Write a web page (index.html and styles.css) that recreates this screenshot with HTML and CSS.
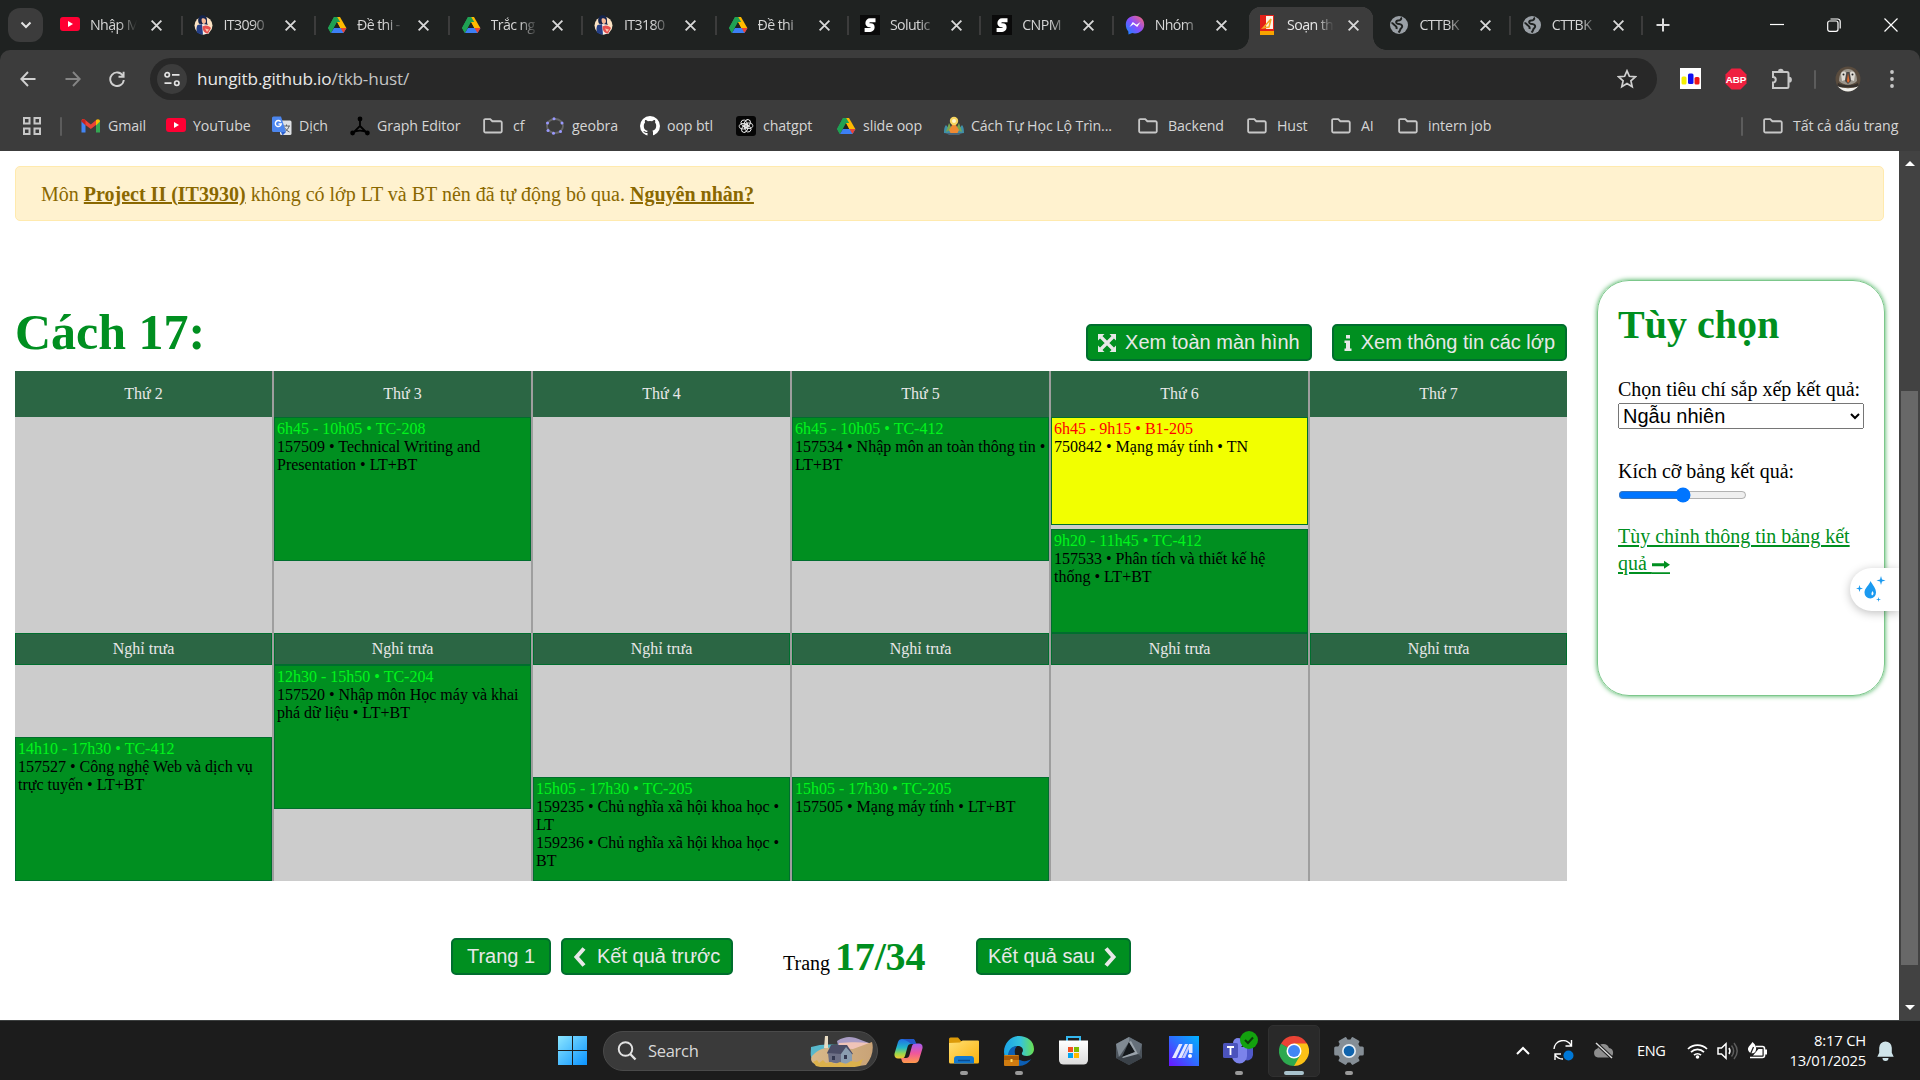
FILE: index.html
```html
<!DOCTYPE html>
<html lang="vi">
<head>
<meta charset="utf-8">
<title>Soạn thời khóa biểu</title>
<link rel="stylesheet" href="styles.css">
</head>
<body>
<svg class="defs" width="0" height="0">
  <defs>
    <linearGradient id="gMsg" x1="0" y1="1" x2="1" y2="0"><stop offset="0" stop-color="#0a8cff"/><stop offset=".5" stop-color="#8a4dff"/><stop offset="1" stop-color="#ff6a6a"/></linearGradient>
    <linearGradient id="gWin" x1="0" y1="0" x2="1" y2="1"><stop offset="0" stop-color="#8ce6ff"/><stop offset="1" stop-color="#0a93ff"/></linearGradient>
    <linearGradient id="gFold" x1="0" y1="0" x2="1" y2="1"><stop offset="0" stop-color="#ffdf73"/><stop offset="1" stop-color="#fbb20c"/></linearGradient>
    <linearGradient id="gAsus" x1="0" y1="1" x2="1" y2="0"><stop offset="0" stop-color="#6a14ff"/><stop offset=".5" stop-color="#2f6bff"/><stop offset="1" stop-color="#00b4ff"/></linearGradient>
    <linearGradient id="gEdge" x1="0" y1="0" x2="1" y2="0"><stop offset="0" stop-color="#1aa3e8"/><stop offset=".55" stop-color="#35c4dc"/><stop offset="1" stop-color="#6be04f"/></linearGradient>
    <linearGradient id="gCopA" x1="0" y1="0" x2="0" y2="1"><stop offset="0" stop-color="#1f6fe8"/><stop offset=".45" stop-color="#22b7c8"/><stop offset=".75" stop-color="#9ad84a"/><stop offset="1" stop-color="#f7c531"/></linearGradient>
    <linearGradient id="gCopB" x1="0" y1="0" x2="0" y2="1"><stop offset="0" stop-color="#a35cf0"/><stop offset=".5" stop-color="#f0569c"/><stop offset="1" stop-color="#ff9a4a"/></linearGradient>
    <linearGradient id="gStore" x1="0" y1="0" x2="0" y2="1"><stop offset="0" stop-color="#fff"/><stop offset="1" stop-color="#dcdcdc"/></linearGradient>
    <linearGradient id="gSand" x1="0" y1="0" x2="1" y2="0"><stop offset="0" stop-color="#d9b98a"/><stop offset="1" stop-color="#c9a377"/></linearGradient>
    <clipPath id="round"><circle cx="13" cy="13" r="12.5"/></clipPath>
    <symbol id="yt" viewBox="0 0 20 20"><rect y="2" width="20" height="14" rx="3" fill="#ff0033"/><path d="M8 6l5 3-5 3z" fill="#fff"/></symbol>
    <symbol id="drive" viewBox="0 0 20 20"><path d="M7 2h6L6.500 12.500 3.700 18 1 13z" fill="#21a354"/><path d="M7 2h6l6.300 11H13z" fill="#ffba00"/><path d="M7 2h3.200l3 5-3.200 0-6 11L1 13z" fill="#1fa153"/><path d="M4 18l3-5h12.500l-3 5z" fill="#3c7ff5"/><path d="M13.500 13h6l-3 5z" fill="#ea4335"/><path d="M10 7.300L13 13H7z" fill="#1f2221"/></symbol>
    <symbol id="girl" viewBox="0 0 20 20" preserveAspectRatio="none"><circle cx="9.500" cy="10.500" r="9" fill="#fce3c4"/><path d="M6.500.8c4-1.500 7 1 6.500 5 0 2 0 3 1 4l-9-1C3.500 6 4 2 6.500.8z" fill="#14244e"/><path d="M8 3.500c2-1 4 .5 4 2.500S11 9 9.500 9 7 4.500 8 3.500z" fill="#f5b896"/><path d="M3.500 10l5-1 2 9.500-3 1.300-4.500-2c-1-3.500-.5-6 .5-7.800z" fill="#243f86"/><path d="M8 9l5 1 3 4-1 4.500-6 1z" fill="#f3efe9"/><path d="M8.500 11.500c3-2 6.500-1 8.500 1.500l-3 5.500c-3 0-5.500-2.500-5.500-7z" fill="#e8504e"/><path d="M11 13.500l4 1-2 2.500z" fill="#ffc2ad"/></symbol>
    <symbol id="studocu" viewBox="0 0 20 20"><rect width="20" height="20" fill="#0a0a0a"/><path d="M15.500 5.300h-5.500a2.600 2.600 0 0 0-2.600 2.600v.3a2 2 0 0 0 2 2h1.200a2 2 0 0 1 2 2v.3a2.400 2.400 0 0 1-2.400 2.400H4.600" fill="none" stroke="#fff" stroke-width="4"/></symbol>
    <symbol id="msg" viewBox="0 0 20 20"><path d="M10 .8c5.300 0 9.200 3.800 9.200 8.800s-3.900 8.800-9.200 8.800c-1 0-2-.1-2.800-.4L3.500 19.500l-.2-3C1.800 14.800.8 12.500.8 9.600.8 4.600 4.700.8 10 .8z" fill="url(#gMsg)"/><path d="M4.500 12l3.300-5 3.700 2.700L15.500 7l-3.300 5-3.700-2.700z" fill="#fff"/></symbol>
    <symbol id="globe" viewBox="0 0 20 20"><circle cx="10" cy="10" r="9" fill="#9aa0a6"/><path d="M12 2.500c1 2-1 3-3 3S6.500 7.500 8 8.500s4 0 5 2-1 2.500-1.500 3.500-.5 2-2 3.500M2.500 8c2 0 2 1.500 3.500 2.500s2 2 1.500 3.500" fill="none" stroke="#1f2221" stroke-width="2"/></symbol>
    <symbol id="x" viewBox="0 0 12 12"><path d="M1.500 1.500l9 9M10.500 1.500l-9 9" stroke="#d8d8d8" stroke-width="1.700" fill="none"/></symbol>
    <symbol id="folder" viewBox="0 0 21 17"><path d="M1.200 2.500a1.200 1.200 0 0 1 1.200-1.300h5.200l2.200 2.300h8.500a1.400 1.400 0 0 1 1.400 1.400v9a1.400 1.400 0 0 1-1.400 1.400H2.600a1.400 1.400 0 0 1-1.400-1.400z" fill="none" stroke="#c7c7c7" stroke-width="1.900"/></symbol>
  </defs>
</svg>

<header class="chrome">
  <div class="tabstrip">
    <button class="tab-search"><svg width="12" height="8" viewBox="0 0 12 8"><path d="M1.500 1.500L6 6l4.500-4.500" fill="none" stroke="#e3e3e3" stroke-width="2"/></svg></button>
    <div class="tabs">
      <div class="tab"><svg class="fav"><use href="#yt"/></svg><span>Nhập M</span><svg class="close"><use href="#x"/></svg></div>
      <div class="tab"><svg class="fav"><use href="#girl"/></svg><span>IT3090</span><svg class="close"><use href="#x"/></svg></div>
      <div class="tab"><svg class="fav"><use href="#drive"/></svg><span>Đề thi -</span><svg class="close"><use href="#x"/></svg></div>
      <div class="tab"><svg class="fav"><use href="#drive"/></svg><span>Trắc ng</span><svg class="close"><use href="#x"/></svg></div>
      <div class="tab"><svg class="fav"><use href="#girl"/></svg><span>IT3180</span><svg class="close"><use href="#x"/></svg></div>
      <div class="tab"><svg class="fav"><use href="#drive"/></svg><span>Đề thi</span><svg class="close"><use href="#x"/></svg></div>
      <div class="tab"><svg class="fav"><use href="#studocu"/></svg><span>Solutic</span><svg class="close"><use href="#x"/></svg></div>
      <div class="tab"><svg class="fav"><use href="#studocu"/></svg><span>CNPM</span><svg class="close"><use href="#x"/></svg></div>
      <div class="tab no-sep"><svg class="fav"><use href="#msg"/></svg><span>Nhóm</span><svg class="close"><use href="#x"/></svg></div>
      <div class="tab active no-sep"><svg class="fav" viewBox="0 0 20 20"><rect x="3" width="14" height="20" fill="#e32119"/><path d="M9 1h7v13H9z" fill="#fff3e6"/><path d="M6 13l8-9-2 8z" fill="none" stroke="#f5a623" stroke-width="1.500"/><rect x="3" y="16" width="14" height="4" fill="#f7a400"/></svg><span>Soạn th</span><svg class="close"><use href="#x"/></svg></div>
      <div class="tab"><svg class="fav"><use href="#globe"/></svg><span>CTTBK</span><svg class="close"><use href="#x"/></svg></div>
      <div class="tab"><svg class="fav"><use href="#globe"/></svg><span>CTTBK</span><svg class="close"><use href="#x"/></svg></div>
    </div>
    <svg class="newtab" width="14" height="14" viewBox="0 0 14 14"><path d="M7 .5v13M.5 7h13" stroke="#dcdcdc" stroke-width="2"/></svg>
    <div class="winctl">
      <svg width="14" height="14" viewBox="0 0 14 14"><path d="M0 6.500h14" stroke="#fff" stroke-width="1.200"/></svg>
      <svg width="14" height="14" viewBox="0 0 14 14"><rect x=".7" y="3" width="10.300" height="10.300" rx="2" fill="none" stroke="#fff" stroke-width="1.200"/><path d="M3.500 1h7a2.500 2.500 0 0 1 2.700 2.500v7" fill="none" stroke="#fff" stroke-width="1.200"/></svg>
      <svg width="14" height="14" viewBox="0 0 14 14"><path d="M.5.5l13 13M13.500.5l-13 13" stroke="#fff" stroke-width="1.200"/></svg>
    </div>
  </div>

  <div class="toolbar">
    <div class="nav">
      <svg width="16" height="16" viewBox="0 0 16 16"><path d="M15.500 8H1.500M8 1L1.300 8 8 15" fill="none" stroke="#d0d0d0" stroke-width="1.900"/></svg>
      <svg width="16" height="16" viewBox="0 0 16 16"><path d="M.5 8h14M8 1l6.700 7L8 15" fill="none" stroke="#858585" stroke-width="1.900"/></svg>
      <svg width="16" height="16" viewBox="0 0 16 16"><path d="M13.800 4.600A6.800 6.800 0 1 0 14.800 9M14.600.8v5H9.500" fill="none" stroke="#d0d0d0" stroke-width="1.900"/></svg>
    </div>
    <div class="omnibox">
      <span class="site"><svg width="16" height="16" viewBox="0 0 16 16"><g fill="none" stroke="#e3e3e3" stroke-width="1.700"><circle cx="3.200" cy="3.800" r="2.200"/><path d="M8 3.800h7.500M.5 12.200h7"/><circle cx="12.800" cy="12.200" r="2.200"/></g></svg></span>
      <span class="url">hungitb.github.io<i>/tkb-hust/</i></span>
      <svg class="star" width="20" height="20" viewBox="0 0 20 20"><path d="M10 1.800l2.400 5.500 6 .5-4.500 4 1.300 5.900L10 14.600l-5.200 3.100 1.300-5.900-4.500-4 6-.5z" fill="none" stroke="#d0d0d0" stroke-width="1.700"/></svg>
    </div>
    <div class="exts">
      <svg width="22" height="22" viewBox="0 0 22 22"><rect width="21" height="21" fill="#fff"/><rect x="1.500" y="8.500" width="5" height="8" rx="1.500" fill="#f4ee00"/><rect x="8" y="5.500" width="5.500" height="10.500" rx="1.500" fill="#1010f0"/><rect x="14.500" y="9" width="5" height="7.500" rx="1.500" fill="#f01818"/></svg>
      <svg width="22" height="22" viewBox="0 0 22 22"><path d="M6.500.5h9l6 6v9l-6 6h-9l-6-6v-9z" fill="#ef1f3f"/><text x="11" y="14.600" text-anchor="middle" class="abp">ABP</text></svg>
      <svg width="22" height="22" viewBox="0 0 22 22"><path d="M2 4h14a1.500 1.500 0 0 1 1.500 1.500v13A1.500 1.500 0 0 1 16 20H2v-5.500a2.700 2.700 0 0 0 0-5.500z" fill="none" stroke="#c7c7c7" stroke-width="2"/><path d="M7 3.500a2.800 2.800 0 0 1 5.600 0zM18 8.800a2.900 2.900 0 0 1 0 5.800z" fill="#c7c7c7"/></svg>
      <i class="vline"></i>
      <svg width="26" height="26" viewBox="0 0 26 26"><g clip-path="url(#round)"><rect width="26" height="26" fill="#5a4c3e"/><path d="M4 15c0-8 4-12 9-12s9 4 9 12c-5 5-13 5-18 0z" fill="#9b958b"/><path d="M6 8c1-3 4-3 5-1l-1 7-3 1zM20 8c-1-3-4-3-5-1l1 7 3 1z" fill="#dedad3"/><circle cx="8.500" cy="8.500" r="1" fill="#222"/><circle cx="17.500" cy="8.500" r="1" fill="#222"/><path d="M11.500 6h3l1.500 9-3 3-3-3z" fill="#4a4645"/><path d="M13 7l1.500 8-1.500 2-1-2z" fill="#e06a2c"/><path d="M3 17c6 3 14 3 20 0l1 4H2z" fill="#35302c"/><path d="M2 20c7 3 15 3 22 0v6H2z" fill="#efeeea"/></g></svg>
      <svg width="4" height="20" viewBox="0 0 4 20"><g fill="#c7c7c7"><circle cx="2" cy="3" r="1.900"/><circle cx="2" cy="10" r="1.900"/><circle cx="2" cy="17" r="1.900"/></g></svg>
    </div>
  </div>

  <nav class="bookmarks">
    <svg class="apps" width="18" height="18" viewBox="0 0 18 18"><g fill="none" stroke="#c7c7c7" stroke-width="2"><rect x="1" y="1" width="5.500" height="5.500"/><rect x="11.500" y="1" width="5.500" height="5.500"/><rect x="1" y="11.500" width="5.500" height="5.500"/><rect x="11.500" y="11.500" width="5.500" height="5.500"/></g></svg>
    <i class="vline"></i>
    <a><svg viewBox="0 0 20 20"><path d="M.5 5v11.500h4V9z" fill="#4285f4"/><path d="M19 5v11.500h-4V9z" fill="#34a853"/><path d="M.5 5c0-2 2-2.500 3.500-1.300L9.800 8.500l5.700-4.800L15 9l-5.200 4L4.500 9z" fill="#ea4335"/><path d="M15 4c2-1.500 4-.5 4 1.500L15 9.500z" fill="#fbbc04"/><path d="M.5 5.500L4.500 9V4C2.500 2.500.5 3.500.5 5.500z" fill="#c5221f"/></svg><span>Gmail</span></a>
    <a><svg><use href="#yt"/></svg><span>YouTube</span></a>
    <a><svg viewBox="0 0 20 20"><rect x="8" y="4.500" width="11.500" height="14.500" rx="1.500" fill="#dfe1e5"/><path d="M11 10h7M14.500 8.500V10M12 16c3-1.500 4.500-3.500 5-6M12.500 11.500c1 2 3 3.500 5 4.500" stroke="#5f6368" fill="none"/><path d="M1.500.5H9L14 16H1.500A1.500 1.500 0 0 1 0 14.500V2A1.500 1.500 0 0 1 1.500.5z" fill="#4c86ee"/><path d="M9 16h5l-3.500 3.500z" fill="#2b5fce"/><path d="M8.700 5.700A3 3 0 1 0 9.300 8H6.500" fill="none" stroke="#fff" stroke-width="1.400"/></svg><span>Dịch</span></a>
    <a><svg viewBox="0 0 20 20"><path d="M10 3v7L3 17M10 10l7 7M3 16.500c4-2.500 10-2.500 14 0" fill="none" stroke="#000" stroke-width="1.800"/><circle cx="10" cy="3" r="2.400"/><circle cx="2.600" cy="17" r="2.400"/><circle cx="17.400" cy="17" r="2.400"/></svg><span>Graph Editor</span></a>
    <a class="dir"><svg><use href="#folder"/></svg><span>cf</span></a>
    <a><svg viewBox="0 0 20 20"><ellipse cx="10" cy="10" rx="8" ry="7" fill="none" stroke="#666" stroke-width="1.800"/><g fill="#9a99ff"><circle cx="9" cy="2.800" r="1.500"/><circle cx="17" cy="7" r="1.500"/><circle cx="15.500" cy="15.500" r="1.500"/><circle cx="8.500" cy="17.300" r="1.500"/><circle cx="3" cy="14.500" r="1.500"/><circle cx="2.500" cy="7" r="1.500"/></g></svg><span>geobra</span></a>
    <a><svg viewBox="0 0 20 20"><circle cx="10" cy="10" r="10" fill="#fff"/><path d="M7.500 20v-3c-3 .6-3.500-1.300-4.300-2 1.800-.4 2 1.200 4 1l.4-1.300C4.500 14.300 3.800 12 3.800 9.800c0-1.300.5-2.200 1.200-3-.3-1-.2-2 .1-2.800 1 0 2 .6 2.800 1.200a9 9 0 0 1 4.200 0C13 4.600 14 4 15 4c.3.900.3 1.900.1 2.800.7.800 1.100 1.700 1.100 3 0 2.600-1 4.500-3.800 4.900.5.600.6 1 .6 2V20z" fill="#3c3c3c"/></svg><span>oop btl</span></a>
    <a><svg viewBox="0 0 20 20"><rect width="20" height="20" rx="3" fill="#050505"/><g fill="none" stroke="#eee" stroke-width=".9"><ellipse cx="10" cy="7.200" rx="2.800" ry="4" transform="rotate(25 10 10)"/><ellipse cx="10" cy="7.200" rx="2.800" ry="4" transform="rotate(85 10 10)"/><ellipse cx="10" cy="7.200" rx="2.800" ry="4" transform="rotate(145 10 10)"/><ellipse cx="10" cy="7.200" rx="2.800" ry="4" transform="rotate(205 10 10)"/><ellipse cx="10" cy="7.200" rx="2.800" ry="4" transform="rotate(265 10 10)"/><ellipse cx="10" cy="7.200" rx="2.800" ry="4" transform="rotate(325 10 10)"/></g></svg><span>chatgpt</span></a>
    <a><svg><use href="#drive"/></svg><span>slide oop</span></a>
    <a><svg viewBox="0 0 20 20"><path d="M0 17c0-5 1-7 2-8l4 5 2 4zM20 17c0-5-1-7-2-8l-4 5-2 4z" fill="#3f8fa8"/><path d="M2 16l3-9 3 6zM18 16l-3-9-3 6z" fill="#79a850"/><path d="M10 6l5 8-2 4H7l-2-4z" fill="#ef8a33"/><circle cx="10" cy="5" r="4.200" fill="#f7d560"/><circle cx="10" cy="5" r="2" fill="#fff6cf"/><path d="M2 17h16l-3 2H5z" fill="#4a6478"/></svg><span>Cách Tự Học Lộ Trìn...</span></a>
    <a class="dir"><svg><use href="#folder"/></svg><span>Backend</span></a>
    <a class="dir"><svg><use href="#folder"/></svg><span>Hust</span></a>
    <a class="dir"><svg><use href="#folder"/></svg><span>AI</span></a>
    <a class="dir"><svg><use href="#folder"/></svg><span>intern job</span></a>
    <i class="vline"></i>
    <a class="dir"><svg><use href="#folder"/></svg><span>Tất cả dấu trang</span></a>
  </nav>
</header>

<div class="viewport">
  <main class="page">
    <div class="alert">Môn <a>Project II (IT3930)</a> không có lớp LT và BT nên đã tự động bỏ qua. <a>Nguyên nhân?</a></div>
    <div class="content">
      <section class="result">
        <div class="result-head">
          <h1>Cách 17:</h1>
          <button class="btn"><svg width="18" height="18" viewBox="0 0 18 18"><g fill="#e8e8e8"><path d="M0 0h6.500L0 6.500zM18 0v6.500L11.500 0zM0 18v-6.500L6.500 18zM18 18h-6.500l6.500-6.500z"/><path d="M3 3l12 12M15 3L3 15" stroke="#e8e8e8" stroke-width="3.200"/></g></svg>Xem toàn màn hình</button>
          <button class="btn"><svg width="8" height="16" viewBox="0 0 8 16"><path d="M2 0h4v3.500H2zM.5 5.500H6v8h1.500V16h-7v-2.500H2V8H.5z" fill="#e8e8e8"/></svg>Xem thông tin các lớp</button>
        </div>
        <div class="timetable">
          <div class="day">
            <div class="dayname">Thứ 2</div>
            <div class="session"></div>
            <div class="lunch">Nghỉ trưa</div>
            <div class="session">
              <div class="lesson" style="--wait:100;--len:200"><b>14h10 - 17h30 • TC-412</b>157527 • Công nghệ Web và dịch vụ trực tuyến • LT+BT</div>
            </div>
          </div>
          <div class="day">
            <div class="dayname">Thứ 3</div>
            <div class="session">
              <div class="lesson" style="--wait:0;--len:200"><b>6h45 - 10h05 • TC-208</b>157509 • Technical Writing and Presentation • LT+BT</div>
            </div>
            <div class="lunch">Nghỉ trưa</div>
            <div class="session">
              <div class="lesson" style="--wait:0;--len:200"><b>12h30 - 15h50 • TC-204</b>157520 • Nhập môn Học máy và khai phá dữ liệu • LT+BT</div>
            </div>
          </div>
          <div class="day">
            <div class="dayname">Thứ 4</div>
            <div class="session"></div>
            <div class="lunch">Nghỉ trưa</div>
            <div class="session">
              <div class="lesson" style="--wait:155;--len:145"><b>15h05 - 17h30 • TC-205</b>159235 • Chủ nghĩa xã hội khoa học • LT<br>159236 • Chủ nghĩa xã hội khoa học • BT</div>
            </div>
          </div>
          <div class="day">
            <div class="dayname">Thứ 5</div>
            <div class="session">
              <div class="lesson" style="--wait:0;--len:200"><b>6h45 - 10h05 • TC-412</b>157534 • Nhập môn an toàn thông tin • LT+BT</div>
            </div>
            <div class="lunch">Nghỉ trưa</div>
            <div class="session">
              <div class="lesson" style="--wait:155;--len:145"><b>15h05 - 17h30 • TC-205</b>157505 • Mạng máy tính • LT+BT</div>
            </div>
          </div>
          <div class="day">
            <div class="dayname">Thứ 6</div>
            <div class="session">
              <div class="lesson lab" style="--wait:0;--len:150"><b>6h45 - 9h15 • B1-205</b>750842 • Mạng máy tính • TN</div>
              <div class="lesson" style="--wait:5;--len:145"><b>9h20 - 11h45 • TC-412</b>157533 • Phân tích và thiết kế hệ thống • LT+BT</div>
            </div>
            <div class="lunch">Nghỉ trưa</div>
            <div class="session"></div>
          </div>
          <div class="day">
            <div class="dayname">Thứ 7</div>
            <div class="session"></div>
            <div class="lunch">Nghỉ trưa</div>
            <div class="session"></div>
          </div>
        </div>
        <div class="pager">
          <button class="btn first">Trang 1</button>
          <button class="btn prev"><svg width="13" height="20" viewBox="0 0 13 20"><path d="M11 1.500L3.500 10l7.500 8.500" fill="none" stroke="#e8e8e8" stroke-width="4"/></svg>Kết quả trước</button>
          <p class="count">Trang <strong>17/34</strong></p>
          <button class="btn next">Kết quả sau<svg width="13" height="20" viewBox="0 0 13 20"><path d="M2 1.500L9.500 10 2 18.500" fill="none" stroke="#e8e8e8" stroke-width="4"/></svg></button>
        </div>
      </section>
      <aside class="options">
        <h2>Tùy chọn</h2>
        <label>Chọn tiêu chí sắp xếp kết quả:</label>
        <select><option>Ngẫu nhiên</option></select>
        <label class="size">Kích cỡ bảng kết quả:</label>
        <input type="range" value="50">
        <a>Tùy chỉnh thông tin bảng kết quả <svg width="18" height="14" viewBox="0 0 18 14"><path d="M0 3.300h12V.8L18 4.800l-6 4v-2.500H0zM0 12.200h18V14H0z" fill="#008f20"/></svg></a>
      </aside>
    </div>
    <div class="floater"><svg width="30" height="28" viewBox="0 0 30 28"><path d="M14.500 5c2 4 5.500 7 5.500 11.500a5.700 6 0 0 1-11.500 0C8.500 12 13.500 9 14.500 5z" fill="#1b9af0"/><path d="M16.500 15c1.500 2 1.300 3.500-.5 4.500-1-1.500-.5-3 .5-4.500z" fill="#fff"/><path d="M25 0l1 3.500 3.500 1-3.500 1L25 9l-1-3.500-3.500-1 3.500-1zM3.500 9l.8 2.700L7 12.500l-2.700.8-.8 2.700-.8-2.700L0 12.500l2.700-.8zM22.500 21l.5 2 2 .5-2 .5-.5 2-.5-2-2-.5 2-.5z" fill="#1b9af0"/></svg></div>
  </main>
  <div class="scrollbar">
    <svg width="10" height="5" viewBox="0 0 10 5"><path d="M5 0l5 5H0z" fill="#fff"/></svg>
    <div class="thumb"></div>
    <svg width="10" height="5" viewBox="0 0 10 5"><path d="M0 0h10L5 5z" fill="#fff"/></svg>
  </div>
</div>

<footer class="taskbar">
  <div class="apps-row">
    <div class="app"><svg width="29" height="29" viewBox="0 0 29 29"><path d="M0 0h14v14H0zM15 0h14v14H15zM0 15h14v14H0zM15 15h14v14H15z" fill="url(#gWin)"/></svg></div>
    <div class="search">
      <svg width="20" height="20" viewBox="0 0 20 20"><circle cx="8.500" cy="8" r="6.800" fill="none" stroke="#e3e3e3" stroke-width="1.900"/><path d="M13.200 13l5.300 5.500" stroke="#e3e3e3" stroke-width="2.400"/></svg>
      <span>Search</span>
      <svg class="scene" width="64" height="32" viewBox="0 0 64 32"><path d="M2 12c10-3 16-3 30-2l4 8-30 8c-6-3-4-8-4-14z" fill="#58b8cc"/><path d="M28 6c10-6 16-4 24-1l8 3-30 6z" fill="#a99cc4"/><path d="M30 8c12-1 20-1 30 0l3 4-33 5z" fill="#f0c4b8"/><path d="M4 20c6-6 12-8 20-7l20 1 19-7c2 7 0 16-6 23-18 3-42 3-53-2-3-3-2-6 0-8z" fill="url(#gSand)"/><path d="M16 1h3v12h-4z" fill="#e9dcc3"/><path d="M18 18l4-8h16l6 9-7 2-18-2z" fill="#4b4d66"/><path d="M19 18l13 1v10l-12-2z" fill="#6c6f85"/><path d="M32 19l5-7 6 7v9l-11 1z" fill="#8a9db0"/><path d="M23 21h3v4h-3zM35 20h3v4h-3z" fill="#333850"/><path d="M4 27l4-2 2 3 4-3 3 3 5-1 4 2 5-2 6 2 5-3 6 1 6-3-3 7c-14 3-34 3-44 0z" fill="#dcb24c"/></svg>
    </div>
    <div class="app"><svg width="29" height="26" viewBox="0 0 29 26"><path d="M8 1h10c3 0 3 2 4 5h-5c-2 0-3 1-3.500 3L11 18c-.7 2-2 2.500-4 2.500H4C1 20.500-.5 18 1 14L4 4c.7-2 2-3 4-3z" fill="url(#gCopA)"/><path d="M21 25H11c-3 0-3-2-4-5h5c2 0 3-1 3.500-3L18 8c.7-2 2-2.500 4-2.500h3c3 0 4.500 2.500 3 6.500l-3 10c-.7 2-2 3-4 3z" fill="url(#gCopB)"/><path d="M8 1h10c3 0 3 2 4 5h-5c-3-3-6-4-9-5z" fill="#2358c8"/></svg></div>
    <div class="app run"><svg width="30" height="27" viewBox="0 0 30 27"><path d="M0 2a1.500 1.500 0 0 1 1.500-1.500H9l3 3.500h6v8H0z" fill="#dc9a08"/><path d="M0 6l11-.5 2.500-2H29a1 1 0 0 1 1 1V25a1.500 1.500 0 0 1-1.500 1.500h-27A1.500 1.500 0 0 1 0 25z" fill="url(#gFold)"/><path d="M5 26.500V22a3 3 0 0 1 3-3h14a3 3 0 0 1 3 3v4.500z" fill="#1278cf"/><path d="M9 23.500h12" stroke="#084c91" stroke-width="1.500"/></svg></div>
    <div class="app run"><svg width="30" height="30" viewBox="0 0 30 30"><path d="M0 16C0 7 7 0 15 0s15 5 15 13c0 4-3 7-7 7-5 0-6-2-4.500-4 1.500-3-1-6-4.500-6C8 10 4 15 4 25 1.500 23 0 20 0 16z" fill="url(#gEdge)"/><path d="M4 20c0-6 4-10 9-10-3 3-3 8 0 12 4 4 10 4 14 1-2 4-7 7-12 7-6 0-11-4-11-10z" fill="#0c5fb5"/><rect y="19" width="15" height="11" rx="1" fill="#d07c10"/><path d="M0 20h15v4H0z" fill="#a85a08"/><rect x="6.500" y="23" width="2" height="3" fill="#ffd75e"/></svg></div>
    <div class="app"><svg width="29" height="29" viewBox="0 0 29 29"><path d="M8 6V1h13v5" fill="none" stroke="#34b7ee" stroke-width="2"/><path d="M0 4.500h29V24a4.500 4.500 0 0 1-4.500 4.500h-20A4.500 4.500 0 0 1 0 24z" fill="url(#gStore)"/><path d="M9 11h5v5H9z" fill="#f25022"/><path d="M15 11h5v5h-5z" fill="#7fba00"/><path d="M9 17h5v5H9z" fill="#00a4ef"/><path d="M15 17h5v5h-5z" fill="#ffb900"/></svg></div>
    <div class="app"><svg width="26" height="28" viewBox="0 0 26 28"><path d="M13 0l13 7v14l-13 7L0 21V7z" fill="#4b535b"/><path d="M13 0L0 7l3 13L13 5z" fill="#808a93"/><path d="M13 0l13 7-3 11L13 5z" fill="#66707a"/><path d="M0 21l5-2 17-2 4 4-13 7z" fill="#3b4249"/><path d="M13 5l6 10-13 5z" fill="#14181b"/><path d="M13 5l2-1 7 13-15 4-1-1 13-5z" fill="#9aa3ab"/></svg></div>
    <div class="app"><svg width="30" height="30" viewBox="0 0 30 30"><rect width="30" height="30" fill="url(#gAsus)"/><path d="M3 22L10 8h3.500L7 22zM9 22l7-14h3l-6.500 14z" fill="#e6e8ff"/><path d="M20 8h3.500v9H20z" fill="#e6e8ff"/><circle cx="21" cy="20" r="2" fill="#fff"/><path d="M13 22l7-14v5l-4 9z" fill="#c3c9ff"/></svg></div>
    <div class="app run"><svg class="teams" width="36" height="34" viewBox="0 0 36 34"><circle cx="15" cy="12" r="5" fill="#7b83eb"/><path d="M20 15h10v9a6 6 0 0 1-8 5z" fill="#5059c9"/><path d="M9 16h15v9a7.500 7.500 0 0 1-15 0z" fill="#7b83eb"/><rect y="12" width="15" height="15" rx="1.500" fill="#4b53bc"/><path d="M4 16h7M7.500 16v8" stroke="#fff" stroke-width="1.800"/><circle cx="26" cy="9" r="9" fill="#13a10e"/><path d="M22 9l3 3 5-5.500" fill="none" stroke="#0a3d08" stroke-width="2"/></svg></div>
    <div class="app run current"><svg width="30" height="30" viewBox="0 0 30 30"><path d="M15 15L2 7.500A15 15 0 0 1 28 7.500z" fill="#ea4335"/><path d="M15 15V7.500h13A15 15 0 0 1 15 30z" fill="#fbc116"/><path d="M15 15l6.500 3.800L15 30A15 15 0 0 1 2 7.500z" fill="#2da94f"/><path d="M2 7.500h13v7.500z" fill="#ea4335"/><circle cx="15" cy="15" r="7.500" fill="#fff"/><circle cx="15" cy="15" r="6" fill="#4186f3"/></svg></div>
    <div class="app run"><svg width="30" height="28" viewBox="0 0 30 28"><g fill="#858e96"><circle cx="15" cy="14" r="11.500"/><rect x="10.500" width="9" height="28" rx="1.500" transform="rotate(30 15 14)"/><rect x="10.500" y="-.8" width="9" height="29.600" rx="1.500" transform="rotate(90 15 14)"/><rect x="10.500" width="9" height="28" rx="1.500" transform="rotate(150 15 14)"/></g><circle cx="15" cy="14" r="7" fill="#e6eef5"/><circle cx="15" cy="14" r="5.300" fill="#0f63ad"/></svg></div>
  </div>
  <div class="tray">
    <svg width="14" height="9" viewBox="0 0 14 9"><path d="M1 8l6-6 6 6" fill="none" stroke="#fff" stroke-width="2"/></svg>
    <svg width="21" height="21" viewBox="0 0 21 21"><path d="M1 9a9 9 0 0 1 17-3.500M18.500 0v6h-6M2 20v-6h6M2 14.500A9 9 0 0 0 10 19" fill="none" stroke="#fff" stroke-width="1.400"/><circle cx="15.500" cy="15.500" r="5" fill="#0078d7"/></svg>
    <svg width="21" height="17" viewBox="0 0 21 17"><path d="M5 15.500a4.600 4.600 0 0 1-.5-9A6 6 0 0 1 16 6a4.800 4.800 0 0 1 0 9.500z" fill="#8e8e8e"/><path d="M3 1l16 15" stroke="#1c1c1c" stroke-width="3.500"/><path d="M3 1l16 15" stroke="#ddd" stroke-width="1.400"/></svg>
    <span class="lang">ENG</span>
    <svg width="21" height="16" viewBox="0 0 21 16"><g fill="none" stroke="#fff" stroke-width="1.700"><path d="M1 6a13.500 13.500 0 0 1 19 0M4 9.200a9 9 0 0 1 13 0M7 12.200a5 5 0 0 1 7 0"/></g><circle cx="10.500" cy="14" r="1.800" fill="#fff"/></svg>
    <svg width="21" height="18" viewBox="0 0 21 18"><path d="M1 6h3.500L9 1.800v14.400L4.500 12H1z" fill="none" stroke="#fff" stroke-width="1.500"/><path d="M12 6c1.300 2 1.300 4 0 6" fill="none" stroke="#fff" stroke-width="1.500"/><path d="M14.500 3.500c2.700 3.500 2.700 7.500 0 11M17 1c4 5 4 11 0 16" fill="none" stroke="#5c5c5c" stroke-width="1.500"/></svg>
    <svg width="21" height="18" viewBox="0 0 21 18"><path d="M9 4.500h6.500a2 2 0 0 1 2 2v7a2 2 0 0 1-2 2H3" fill="none" stroke="#fff" stroke-width="1.600"/><path d="M19 7.500v5" stroke="#fff" stroke-width="2"/><path d="M11.500 7h4v6.500H6z" fill="#fff"/><path d="M5.500 0C9 3 10 6 8.500 9.500 7 12 3 12 1.500 9 0 5.500 2 5 5.500 0z" fill="#fff"/><path d="M6.500 5L3 13" stroke="#1c1c1c" stroke-width="1.200"/></svg>
    <div class="clock">8:17 CH<br>13/01/2025</div>
    <svg width="17" height="20" viewBox="0 0 17 20"><path d="M8.500.5a6.300 6.300 0 0 1 6.300 6.300v5l1.900 4H.3l1.900-4v-5A6.300 6.300 0 0 1 8.500.5z" fill="#cfe4ea"/><path d="M5.500 17h6a3 3 0 0 1-6 0z" fill="#cfe4ea"/></svg>
  </div>
</footer>
</body>
</html>
```
FILE: styles.css
```css
* { box-sizing: border-box; }
html, body { margin: 0; height: 1080px; overflow: hidden; }
body {
  display: flex; flex-direction: column; width: 1920px;
  background: #fff; color: #000;
  font: 20px/1.15 "Liberation Serif", "Times New Roman", serif;
}
svg { display: block; flex: none; }
.defs { position: absolute; }
button { font: inherit; border: 0; padding: 0; }
h1, h2, p { margin: 0; }

/* Browser frame */
.chrome {
  height: 151px; flex: none; background: #1f2221; color: #d5d5d5;
  font: 14.2px/20px "Open Sans", "Noto Sans", sans-serif;
}
.tabstrip { display: flex; align-items: center; height: 50px; padding-left: 8px; }
.tab-search {
  width: 35px; height: 34px; border-radius: 12px; background: #3c3c3c;
  display: flex; align-items: center; justify-content: center;
}
.tabs { display: flex; margin-left: 5px; height: 50px; }
.tab {
  position: relative; width: 132.400px; height: 50px; padding-left: 12px;
  display: flex; align-items: center;
}
.tab:nth-child(-n+5) { width: 133.500px; }
.tab .fav { width: 20px; height: 20px; }
.tab span {
  width: 48px; margin-left: 10px; overflow: hidden; white-space: nowrap; letter-spacing: -.6px;
  -webkit-mask-image: linear-gradient(90deg, #000 60%, transparent 98%);
  mask-image: linear-gradient(90deg, #000 60%, transparent 98%);
}
.tab .close { width: 13px; height: 13px; margin-left: 12px; }
.tab::after {
  content: ""; position: absolute; right: -1px; top: 16px; width: 2px; height: 19px; background: #3c3c3c;
}
.tab.no-sep::after { display: none; }
.tab.active { z-index: 1; color: #e8e8e8; }
.tab.active::before {
  content: ""; position: absolute; z-index: -1; left: -9px; right: -9px; top: 7px; bottom: 0;
  background:
    radial-gradient(circle at 0 0, transparent 12.500px, #3c3c3c 13px) left bottom / 13px 13px no-repeat,
    radial-gradient(circle at 100% 0, transparent 12.500px, #3c3c3c 13px) right bottom / 13px 13px no-repeat,
    radial-gradient(circle at 100% 100%, #3c3c3c 12px, transparent 12.500px) 13px 0 / 12px 12px no-repeat,
    radial-gradient(circle at 0 100%, #3c3c3c 12px, transparent 12.500px) calc(100% - 13px) 0 / 12px 12px no-repeat,
    linear-gradient(#3c3c3c, #3c3c3c) 25px 0 / calc(100% - 50px) 12px no-repeat,
    linear-gradient(#3c3c3c, #3c3c3c) 13px 12px / calc(100% - 26px) 100% no-repeat;
}
.newtab { margin-left: 14px; }
.winctl { display: flex; gap: 43px; margin: 0 22px 0 auto; }

.toolbar {
  display: flex; align-items: center; height: 58px; padding-left: 20px;
  background: #3c3c3c; border-radius: 10px 10px 0 0;
}
.nav { display: flex; gap: 28.500px; width: 130px; }
.omnibox {
  display: flex; align-items: center; width: 1507px; height: 42px; padding: 0 20px 0 7px;
  border-radius: 21px; background: #282828;
}
.site {
  width: 30px; height: 30px; border-radius: 50%; background: #3c3c3c;
  display: flex; align-items: center; justify-content: center;
}
.url { margin-left: 10px; font-size: 17.200px; line-height: 24px; letter-spacing: -.15px; color: #e8e8e8; }
.url i { font-style: normal; color: #c4c4c4; }
.star { margin-left: auto; }
.exts { display: grid; grid-template-columns: 45px 46px 43px 21px 55px 4px; align-items: center; margin-left: 23px; }
.abp { font: bold 9.800px "Liberation Sans", Arial, sans-serif; fill: #fff; }
.vline { width: 2px; height: 19px; background: #5c5c5c; border-radius: 1px; }

.bookmarks {
  display: grid; align-items: center; height: 43px; background: #3c3c3c;
  padding: 0 0 7px 23px;
  grid-template-columns: 37px 21px 85px 106px 78px 133px 62px 95px 96px 100px 108px 194px 109px 84px 67px 343px 22px auto;
}
.bookmarks a { display: flex; align-items: center; gap: 7px; white-space: nowrap; letter-spacing: -.1px; }
.bookmarks a svg { width: 20px; height: 20px; }
.bookmarks a.dir { gap: 10px; }

/* Page */
.viewport { display: flex; height: 869px; flex: none; }
.page { position: relative; width: 1899px; padding: 15px; background: #fff; }
.alert {
  height: 55px; padding: 0 25px; border: 1px solid #ffeaae; border-radius: 5px;
  background: #fff2cf; color: #8a6800; line-height: 54px;
}
.alert a { font-weight: bold; text-decoration: underline; }
.content { display: flex; align-items: flex-start; gap: 30px; margin-top: 59px; }
.result { width: 1552px; }
.result-head { display: flex; align-items: flex-end; gap: 20px; height: 91px; padding-bottom: 10px; }
.result-head h1 { margin: 0 auto 1px 0; font-size: 50px; line-height: 56px; color: #008f20; }
.btn {
  display: flex; align-items: center; height: 37px; padding: 0 10px; gap: 9px;
  border: 2px solid #006e2e; border-radius: 5px; background: #008f20; color: #e8e8e8;
  font: 20px/33px "Liberation Sans", Arial, sans-serif; white-space: nowrap;
}
.timetable { display: grid; grid-template-columns: repeat(6, 257px); gap: 2px; background: #9e9e9e; font-size: 16px; line-height: 18px; }
.dayname, .lunch { background: #2b6644; color: #e8e8e8; text-align: center; }
.dayname { height: 46px; line-height: 45px; }
.lunch { height: 32px; line-height: 30px; border: 1px solid #006e2e; }
.session { display: flow-root; height: 216px; background: #ccc; }
.lesson {
  height: calc(var(--len) * .72px); margin-top: calc(var(--wait) * .72px);
  padding: 2px; border: 1px solid #006e2e; background: #008f20;
}
.lesson b { display: block; font-weight: normal; color: #00f51c; }
.lesson.lab { background: #f2ff00; }
.lesson.lab b { color: #f00; }

.pager { display: flex; align-items: center; height: 37px; margin: 57px 0 0 436px; }
.pager .first { width: 100px; justify-content: center; }
.pager .prev { width: 172px; margin-left: 10px; gap: 11px; }
.pager .count { width: 142px; margin: 6px 51px 0 50px; line-height: 40px; white-space: nowrap; }
.pager .count strong { font-size: 40px; letter-spacing: -.2px; color: #008f20; }
.pager .next { width: 155px; }

.options {
  width: 289px; height: 416px; padding: 22px 20px; border: 1px solid #7cc78b; border-radius: 32px;
  box-shadow: 0 0 5px #3fae55; line-height: 27px;
}
.options h2 { font-size: 40px; line-height: 44px; color: #008f20; }
.options label { display: block; margin-top: 29px; white-space: nowrap; }
.options select {
  display: block; width: 246px; height: 26px; font: 20px "Liberation Sans", Arial, sans-serif;
}
.options .size { margin-top: 29px; }
.options input { display: block; margin: 2px 0 0; width: 129px; }
.options a { display: block; margin-top: 20px; color: #008f20; text-decoration: underline; text-underline-offset: 2px; }
.options a svg { display: inline-block; vertical-align: -4px; }
.floater {
  position: absolute; right: 0; top: 417px; width: 49px; height: 43px; padding: 8px 0 0 6px;
  border-radius: 22px 0 0 22px; background: #fff; box-shadow: 0 2px 10px rgba(0, 0, 0, .25); clip-path: inset(-20px 0 -20px -20px);
}
.scrollbar { display: flex; flex-direction: column; align-items: center; width: 21px; padding: 10px 0; background: #424242; }
.thumb { width: 17px; height: 574px; margin: 225px 0 auto; background: #686868; }

/* Taskbar */
.taskbar {
  display: flex; justify-content: space-between; height: 60px; flex: none; border-top: 1px solid #3c3f3f;
  background: #1c1c1c; color: #fff; font: 15px/20px "Open Sans", "Noto Sans", sans-serif;
}
.apps-row {
  display: grid; grid-template-columns: 55px 281px repeat(9, 55px); align-items: center;
  margin-left: 545px;
}
.app { position: relative; display: flex; align-items: center; justify-content: center; height: 59px; }
.app svg { position: relative; }
.app .teams { top: -3px; left: 2px; }
.app.run::after {
  content: ""; position: absolute; left: 23.500px; bottom: 5px; width: 8px; height: 4px; border-radius: 2px; background: #9a9a9a;
}
.app.current::before {
  content: ""; position: absolute; left: 2px; top: 4px; width: 50px; height: 50px;
  border: 1px solid #303030; border-radius: 5px; background: #292929;
}
.app.current::after { left: 17.500px; width: 20px; background: #a9c3cd; }
.search {
  display: flex; align-items: center; width: 275px; height: 40px; margin-left: 3px; padding: 0 4px 0 13px;
  border: 1px solid #4a4a4a; border-radius: 20px; background: #3a3a3a; color: #d8d8d8; font-size: 16.500px;
}
.search span { margin-left: 11px; letter-spacing: -.3px; }
.scene { margin-left: auto; }
.tray { display: grid; grid-template-columns: 37px 40px 44px 50px 30px 30px 24px 95px 28px; align-items: center; margin: 0 26px 0 0; }
.lang { font-size: 14.500px; letter-spacing: -.3px; }
.clock { text-align: right; font-size: 14.800px; letter-spacing: -.2px; margin-top: -2px; }
.tray svg:last-child { margin-left: 11px; }
```
